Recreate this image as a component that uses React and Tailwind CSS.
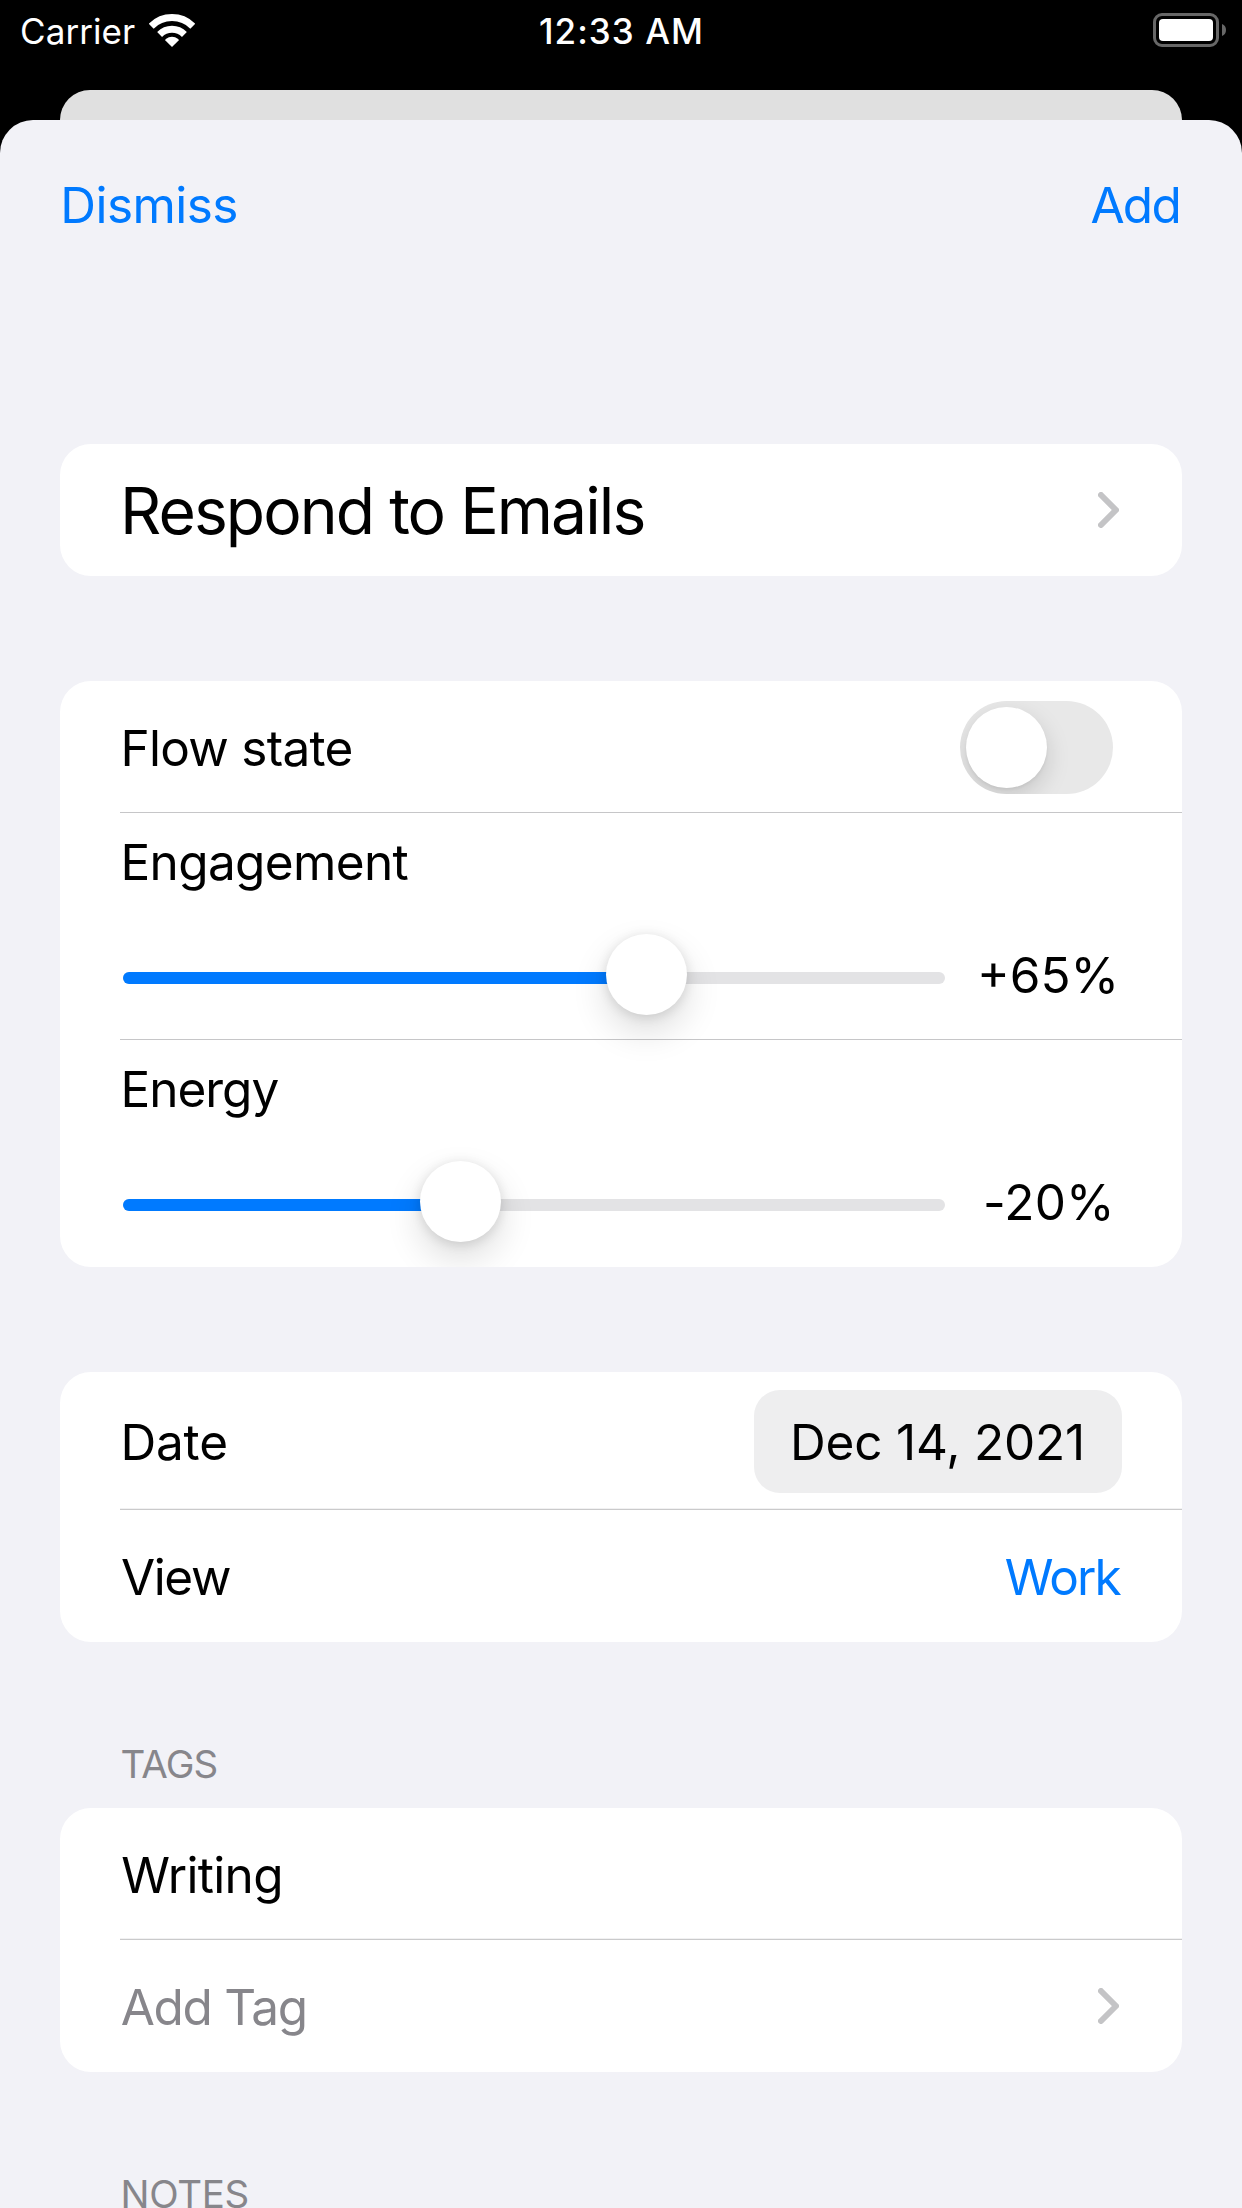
function Wifi() {
  return (
    <svg className="ml-[14px] h-[33px] w-[46px]" viewBox="0 0 46 33" fill="none">
      <path d="M2.2 12.2A29.4 29.4 0 0 1 43.8 12.2" stroke="white" strokeWidth="7" />
      <path d="M10.6 20.4A17.8 17.8 0 0 1 35.4 20.4" stroke="white" strokeWidth="7" />
      <path d="M23 33L16.4 26.4Q16 25.6 16.8 25Q23 20.6 29.2 25Q30 25.6 29.6 26.4Z" fill="white" />
    </svg>
  );
}

function Battery() {
  return (
    <svg className="h-[34px] w-[73px]" viewBox="0 0 73 34" fill="none">
      <rect x="1.5" y="1.5" width="63" height="31" rx="7.5" stroke="#676767" strokeWidth="3" />
      <rect x="6" y="6" width="54" height="22" rx="4" fill="white" />
      <path d="M69 11Q73 12.5 73 17Q73 21.5 69 23Z" fill="#676767" />
    </svg>
  );
}

function Chevron() {
  return (
    <svg className="mr-[63px] h-9 w-[21px] shrink-0" viewBox="0 0 21 36" fill="none">
      <path d="M3 3L18 18L3 33" stroke="#c4c4c6" strokeWidth="6" strokeLinecap="round" strokeLinejoin="round" />
    </svg>
  );
}

function Card({ className, children }) {
  return <section className={`overflow-hidden rounded-[31px] bg-white ${className}`}>{children}</section>;
}

function Divider() {
  return <div className="ml-[60px] h-px bg-[#c6c6c8]" />;
}

function SoftDivider() {
  return <div className="ml-[60px] h-[2px] border-t border-b border-t-[#f1f1f2] border-b-[#cacacb]" />;
}

function SliderRow({ label, labelClass, fill, thumb, value, valueClass }) {
  return (
    <div>
      <div className={`pl-[60.5px] leading-[98px] ${labelClass}`}>{label}</div>
      <div className="flex h-32 pl-[63px]">
        <div className="relative w-[822px] pt-[61px]">
          <div className="h-3 overflow-hidden rounded-full bg-[#e3e3e5]">
            <div className="h-full bg-[#007aff]" style={{ width: fill }} />
          </div>
          <div
            className="absolute top-[23px] size-[81px] rounded-full bg-white shadow-[0_2px_12px_rgba(0,0,0,0.12),0_16px_36px_rgba(0,0,0,0.14)]"
            style={{ left: thumb }}
          />
        </div>
        <div className={`leading-[128px] ${valueClass}`}>{value}</div>
      </div>
    </div>
  );
}

function SectionTitle({ className, children }) {
  return (
    <h2 className={`ml-[60.5px] text-[38.5px] text-[#87868b] ${className}`}>
      {children}
    </h2>
  );
}

export default function App() {
  return (
    <div className="flex h-[2208px] w-[1242px] flex-col overflow-hidden bg-black font-['Inter','Liberation_Sans',sans-serif] text-[49.5px] whitespace-nowrap text-black">
      <header className="grid h-[90px] shrink-0 grid-cols-3 text-[35px] leading-[62px] text-white">
        <div className="flex h-[60px] items-center pl-5">
          <span className="pt-[2px] tracking-[0.08px]">Carrier</span>
          <Wifi />
        </div>
        <div className="pl-[1px] text-center font-[550] tracking-[1.05px]">12:33 AM</div>
        <div className="flex h-[60px] items-center justify-end pr-4">
          <Battery />
        </div>
      </header>

      <div className="mx-[60px] h-[30px] shrink-0 rounded-t-[30px] bg-[#e0e0e0]" />

      <main className="grow rounded-t-[33px] bg-[#f2f2f7] px-[60px]">
        <nav className="flex h-[170px] items-center justify-between pr-[2px] pl-[0.3px] text-[#007aff]">
          <button className="tracking-[-0.55px]">Dismiss</button>
          <button className="tracking-[-1.73px]">Add</button>
        </nav>

        <Card className="mt-[154px] flex h-[132px] items-center justify-between">
          <span className="pt-[3px] pl-[60px] text-[64.2px] tracking-[-1.95px]">Respond to Emails</span>
          <Chevron />
        </Card>

        <Card className="mt-[105px] h-[586px]">
          <div className="flex h-[131px] items-center justify-between pt-[2px] pr-[69px] pl-[60.5px]">
            <span className="pt-[2px] tracking-[-0.72px]">Flow state</span>
            <div className="h-[93px] w-[153px] overflow-hidden rounded-full bg-[#e8e8e8] p-[6px]">
              <div className="size-[81px] rounded-full bg-white shadow-[0_2px_3px_rgba(0,0,0,0.05),0_9px_24px_rgba(0,0,0,0.15)]" />
            </div>
          </div>
          <Divider />
          <SliderRow
            label="Engagement"
            labelClass="tracking-[-0.65px]"
            fill={520}
            thumb={483}
            value="+65%"
            valueClass="pl-[32px] tracking-[0px]"
          />
          <Divider />
          <SliderRow
            label="Energy"
            labelClass="tracking-[-1.02px]"
            fill={335}
            thumb={297}
            value="-20%"
            valueClass="pl-[38px] tracking-[0.2px]"
          />
        </Card>

        <Card className="mt-[105px] h-[270px]">
          <div className="flex h-[136px] justify-between pt-[18px] pr-[60px] pl-[60.5px] leading-[105px]">
            <span className="tracking-[-0.2px]">Date</span>
            <div className="h-[103px] w-[368px] rounded-[26px] bg-[#eeeeef] pl-9 tracking-[-0.18px]">Dec 14, 2021</div>
          </div>
          <SoftDivider />
          <div className="flex h-[132px] items-center justify-between pt-[2px] pr-[62px] pl-[61px]">
            <span className="tracking-[-1.4px]">View</span>
            <span className="tracking-[-1.8px] text-[#007aff]">Work</span>
          </div>
        </Card>

        <SectionTitle className="mt-[97px] leading-[50px] tracking-[-0.85px]">TAGS</SectionTitle>
        <Card className="mt-[19px] h-[264px]">
          <div className="h-[130px] pl-[61.2px] leading-[134px] tracking-[-0.65px]">Writing</div>
          <SoftDivider />
          <div className="flex h-[132px] items-center justify-between">
            <span className="pt-[2px] pl-[60.7px] tracking-[-1.3px] text-[#87868b]">Add Tag</span>
            <Chevron />
          </div>
        </Card>

        <SectionTitle className="mt-[108px] leading-[28px] tracking-[-0.32px]">NOTES</SectionTitle>
      </main>
    </div>
  );
}
